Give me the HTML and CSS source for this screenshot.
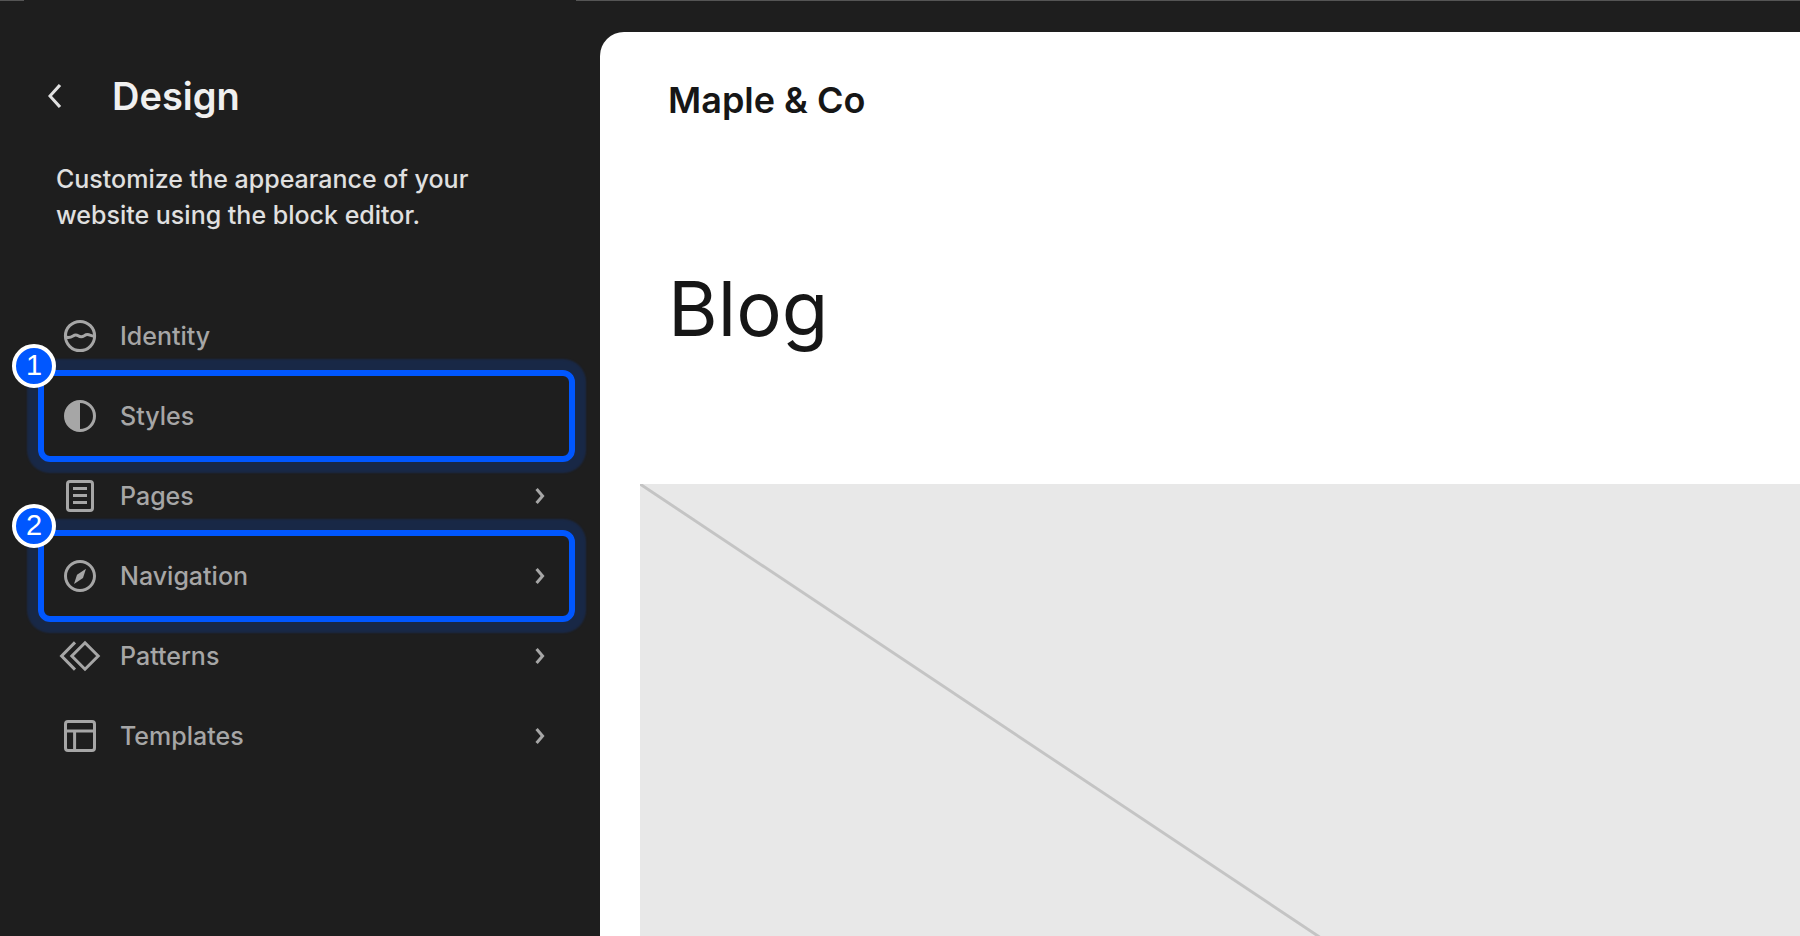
FILE: index.html
```html
<!DOCTYPE html>
<html lang="en">

<head>
    <meta charset="UTF-8">
    <meta name="viewport" content="width=device-width, initial-scale=1.0">
    <title>Design</title>
    <link rel="stylesheet" href="styles.css">
</head>

<body>
<div class="top-edge"></div>
<div class="editor">
    <aside class="sidebar">
        <header class="sidebar-header">
            <button class="back" type="button" aria-label="Back">
                <svg class="icon" viewBox="0 0 24 24"><path d="M14.6 7l-1.2-1L8 12l5.4 6 1.2-1-4.6-5z"/></svg>
            </button>
            <h1>Design</h1>
        </header>
        <p class="description">Customize the appearance of your website using the block editor.</p>

        <nav>
            <ul class="menu">
                <li>
                    <a href="#identity">
                        <svg class="icon line" viewBox="0 0 24 24">
                            <circle cx="12" cy="12" r="7.3"/>
                            <path d="M4.8 12.5c1.4.5 2.5.3 3.7-.5 1-.7 1.700-.7 2.600-.1 1.100.7 1.900.7 3 0 1-.7 1.900-.8 2.900-.3.700.3 1.300.5 2.200.5"/>
                        </svg>
                        <span>Identity</span>
                    </a>
                </li>
                <li class="highlight">
                    <a href="#styles">
                        <svg class="icon" viewBox="0 0 24 24"><path fill-rule="evenodd" d="M20 12a8 8 0 1 1-16 0 8 8 0 0 1 16 0Zm-1.500 0a6.500 6.500 0 0 1-6.500 6.500v-13a6.500 6.500 0 0 1 6.500 6.500Z"/></svg>
                        <span>Styles</span>
                    </a>
                    <span class="badge">1</span>
                </li>
                <li>
                    <a href="#pages">
                        <svg class="icon" viewBox="0 0 24 24">
                            <path d="M15.500 7.500h-7V9h7V7.500Zm-7 3.500h7v1.500h-7V11Zm7 3.500h-7V16h7v-1.500Z"/>
                            <path d="M17 4H7a2 2 0 0 0-2 2v12a2 2 0 0 0 2 2h10a2 2 0 0 0 2-2V6a2 2 0 0 0-2-2ZM7 5.500h10a.500.500 0 0 1 .500.500v12a.500.500 0 0 1-.500.500H7a.500.500 0 0 1-.500-.500V6a.500.500 0 0 1 .500-.500Z" fill-rule="evenodd"/>
                        </svg>
                        <span>Pages</span>
                        <svg class="icon chevron" viewBox="0 0 24 24"><path d="M10.860 8.040l3.420 3.990-3.420 3.990-1.140-.980 2.580-3.010-2.580-3.010z"/></svg>
                    </a>
                </li>
                <li class="highlight">
                    <a href="#navigation">
                        <svg class="icon" viewBox="0 0 24 24"><path d="M12 4c-4.400 0-8 3.600-8 8s3.600 8 8 8 8-3.600 8-8-3.600-8-8-8zm0 14.500c-3.600 0-6.500-2.900-6.500-6.500S8.400 5.500 12 5.500s6.500 2.900 6.500 6.500-2.900 6.500-6.500 6.500zM9 16l4.500-3L15 8.400l-4.500 3L9 16z"/></svg>
                        <span>Navigation</span>
                        <svg class="icon chevron" viewBox="0 0 24 24"><path d="M10.860 8.040l3.420 3.990-3.420 3.990-1.140-.980 2.580-3.010-2.580-3.010z"/></svg>
                    </a>
                    <span class="badge">2</span>
                </li>
                <li>
                    <a href="#patterns">
                        <svg class="icon line" viewBox="0 0 24 24">
                            <path d="M14.500 5.400l6.600 6.600-6.600 6.600L7.900 12z"/>
                            <path d="M9.500 5.200L2.800 12l6.700 6.800"/>
                        </svg>
                        <span>Patterns</span>
                        <svg class="icon chevron" viewBox="0 0 24 24"><path d="M10.860 8.040l3.420 3.990-3.420 3.990-1.140-.980 2.580-3.010-2.580-3.010z"/></svg>
                    </a>
                </li>
                <li>
                    <a href="#templates">
                        <svg class="icon line" viewBox="0 0 24 24">
                            <rect x="4.750" y="4.750" width="14.500" height="14.500" rx="1.250"/>
                            <path d="M4.750 9.500h14.500M9.300 9.500v9.750"/>
                        </svg>
                        <span>Templates</span>
                        <svg class="icon chevron" viewBox="0 0 24 24"><path d="M10.860 8.040l3.420 3.990-3.420 3.990-1.140-.980 2.580-3.010-2.580-3.010z"/></svg>
                    </a>
                </li>
            </ul>
        </nav>
    </aside>

    <main class="preview">
        <p class="site-title">Maple &amp; Co</p>
        <h2>Blog</h2>
        <!-- Featured image placeholder -->
        <svg class="placeholder" viewBox="0 0 1200 800"><path d="M0 0l1200 800"/></svg>
    </main>
</div>
</body>

</html>
```

FILE: styles.css
```css
* {
    box-sizing: border-box;
}

body {
    display: flex;
    flex-direction: column;
    height: 100vh;
    margin: 0;
    overflow: hidden;
    background-color: #1e1e1e;
    color: #e0e0e0;
    font-family: Inter, sans-serif;
}

.top-edge {
    flex: none;
    height: 1px;
    background: linear-gradient(to right, #555 24px, transparent 24px, transparent 32%, #555 32%);
}

.editor {
    display: grid;
    grid-template-columns: 1fr 2fr;
    flex: 1;
    min-height: 0;
}

.sidebar {
    padding-top: 71px;
}

.sidebar-header {
    display: flex;
    align-items: center;
    gap: 32px;
    padding-left: 32px;
}

h1 {
    margin: 0;
    color: #f0f0f0;
    font-size: 38px;
    font-weight: 600;
    line-height: 48px;
}

.back {
    padding: 0;
    border: none;
    background: none;
    color: #e0e0e0;
    cursor: pointer;
}

.icon {
    display: block;
    flex: none;
    width: 48px;
    height: 48px;
    fill: currentColor;
}

.line {
    fill: none;
    stroke: currentColor;
    stroke-width: 1.5;
}

.description {
    margin: 41px 56px 0;
    max-width: 440px;
    font-size: 25px;
    font-weight: 500;
    line-height: 36px;
}

.menu {
    margin: 63px 25px 0 38px;
    padding: 0;
    list-style: none;
}

.menu li {
    position: relative;
}

.menu a {
    display: flex;
    align-items: center;
    gap: 16px;
    height: 80px;
    padding: 0 11px 0 18px;
    color: #a6a6a6;
    font-size: 25px;
    font-weight: 500;
    text-decoration: none;
}

.chevron {
    margin-left: auto;
}

.highlight::after {
    content: "";
    position: absolute;
    inset: -6px 0;
    border: 6px solid #0057ff;
    border-radius: 12px;
    box-shadow: 0 0 2px 11px rgba(0, 87, 255, 0.18);
    pointer-events: none;
}

.badge {
    position: absolute;
    z-index: 1;
    top: -32px;
    left: -26px;
    width: 44px;
    height: 44px;
    border: 4px solid #fff;
    border-radius: 50%;
    background-color: #0057ff;
    color: #fff;
    font-family: "Liberation Sans", sans-serif;
    font-size: 29px;
    line-height: 34px;
    text-align: center;
}

.preview {
    margin-top: 31px;
    padding-left: 40px;
    overflow: hidden;
    border-top-left-radius: 24px;
    background-color: #fff;
    color: #161616;
}

.site-title {
    margin: 44px 0 0 28px;
    font-size: 36px;
    font-weight: 600;
    line-height: 48px;
}

h2 {
    margin: 136px 0 128px 28px;
    font-size: 76px;
    font-weight: 400;
    line-height: 96px;
}

.placeholder {
    display: block;
    width: 100%;
    background-color: #e8e8e8;
    fill: none;
    stroke: #c4c4c4;
    stroke-width: 3;
}
```
